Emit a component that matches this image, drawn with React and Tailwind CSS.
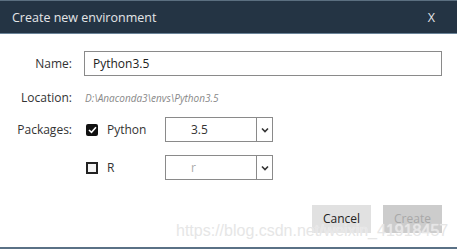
import React from 'react';

function Chevron() {
  return (
    <svg width="8" height="6" viewBox="0 0 8 6" fill="none">
      <path d="M1 1.5 L4 4.5 L7 1.5" stroke="#333" strokeWidth="1.6" />
    </svg>
  );
}

function Select({ value, muted }) {
  return (
    <div className="flex w-[108px] h-[25px] border border-[#8a8a8a] bg-white">
      <div className={`flex-1 flex items-center pl-[25px] text-[12px] ${muted ? 'text-[#aaaaaa]' : 'text-[#333]'}`}>{value}</div>
      <div className="w-[16px] border-l border-[#8a8a8a] flex items-center justify-center">
        <Chevron />
      </div>
    </div>
  );
}

export default function App() {
  return (
    <div className="relative w-[457px] h-[249px] bg-white flex flex-col overflow-hidden" style={{ fontFamily: '"Open Sans", "Noto Sans", sans-serif' }}>
      {/* title bar */}
      <div className="h-[34px] bg-[#243444] border-t border-t-[#5b6f80] border-b border-b-[#6a8398] flex items-center justify-between pl-[12px] pr-[22px] pt-[3px] text-[12.5px] text-[#e4e6e8]">
        <span>Create new environment</span>
        <span>X</span>
      </div>

      <div className="flex-1 flex flex-col pt-[17px] text-[12px] text-[#333]">
        {/* name */}
        <div className="flex items-center h-[25px]">
          <div className="w-[72px] text-right">Name:</div>
          <div className="ml-[12px] w-[358px] h-[25px] border border-[#8a8a8a] flex items-center pl-[8px] text-[#222]">Python3.5</div>
        </div>

        {/* location */}
        <div className="flex items-center h-[24px] mt-[10px]">
          <div className="w-[72px] text-right">Location:</div>
          <div className="ml-[13px] text-[10px] italic text-[#888]">D:\Anaconda3\envs\Python3.5</div>
        </div>

        {/* packages */}
        <div className="flex items-center h-[25px] mt-[7px]">
          <div className="w-[72px] text-right">Packages:</div>
          <div className="ml-[14px] w-[12px] h-[12px] rounded-[2px] bg-[#111] flex items-center justify-center">
            <svg width="9" height="8" viewBox="0 0 9 8" fill="none">
              <path d="M1 4 L3.5 6.3 L8 1.3" stroke="#fff" strokeWidth="1.6" />
            </svg>
          </div>
          <div className="ml-[9px] w-[58px]">Python</div>
          <Select value="3.5" />
        </div>

        <div className="flex items-center h-[25px] mt-[13px]">
          <div className="w-[72px]" />
          <div className="ml-[14px] w-[12px] h-[12px] border-2 border-[#222] bg-[#f4f4f4]" />
          <div className="ml-[9px] w-[58px]">R</div>
          <Select value="r" muted />
        </div>

        {/* buttons */}
        <div className="flex justify-end gap-[12px] pr-[15px] mt-[25px]">
          <button className="w-[59px] h-[28px] bg-[#e1e1e1] text-[12px] text-[#222]">Cancel</button>
          <button className="w-[59px] h-[28px] bg-[#cccccc] text-[12px] text-[#a8a8a8]">Create</button>
        </div>
      </div>

      <div className="h-[2px] bg-[#5a7186]" />

      {/* watermark */}
      <div className="absolute left-[176px] top-[219px] text-[16px] text-[#e6e6e6] pointer-events-none" style={{ fontFamily: '"Liberation Sans", Arial, sans-serif', textShadow: '0 0 1px rgba(255,255,255,0.8)' }}>
        https://blog.csdn.net/weixin_41918457
      </div>
    </div>
  );
}
